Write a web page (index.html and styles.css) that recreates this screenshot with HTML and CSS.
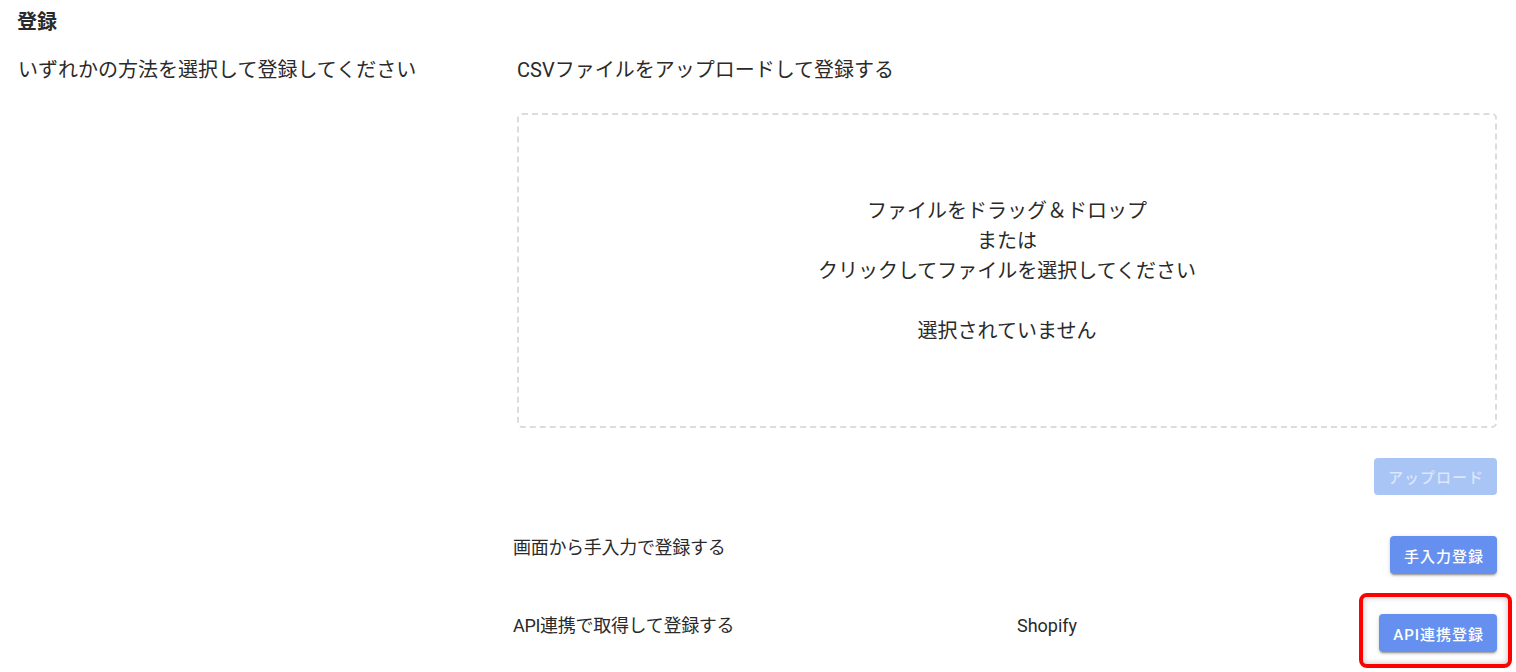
FILE: index.html
```
<!DOCTYPE html>
<html lang="ja">
<head>
    <meta charset="UTF-8">
    <meta name="viewport" content="width=device-width, initial-scale=1.0">
    <title>登録</title>
    <link rel="stylesheet" href="styles.css">
</head>
<body>

    <div class="page">
        <h1>登録</h1>

        <div class="layout">
            <div class="lead">いずれかの方法を選択して登録してください</div>

            <div class="methods">
                <h2>CSVファイルをアップロードして登録する</h2>

                <div class="drop-zone">
                    <p>ファイルをドラッグ＆ドロップ<br>または<br>クリックしてファイルを選択してください</p>
                    <p class="file-name">選択されていません</p>
                </div>

                <div class="upload-row">
                    <button type="button" class="btn" disabled>アップロード</button>
                </div>

                <div class="method-row">
                    <span class="label">画面から手入力で登録する</span>
                    <span class="value"></span>
                    <button type="button" class="btn">手入力登録</button>
                </div>

                <div class="method-row">
                    <span class="label">API連携で取得して登録する</span>
                    <span class="value">Shopify</span>
                    <div class="highlight-wrap">
                        <button type="button" class="btn">API連携登録</button>
                        <span class="highlight"></span>
                    </div>
                </div>
            </div>
        </div>
    </div>

</body>
</html>
```

FILE: styles.css
```
body {
    font-family: Roboto, "Noto Sans CJK JP", sans-serif;
    color: #2a2a2a;
    background: #fff;
    margin: 0;
    min-height: 100vh;
}

.page {
    padding: 8px 19px 30px 17px;
}

h1 {
    font-size: 20px;
    font-weight: bold;
    line-height: 28px;
    margin: 0;
}

.layout {
    display: grid;
    grid-template-columns: 500px 1fr;
    margin-top: 19px;
}

.lead {
    font-size: 20px;
    line-height: 30px;
    padding-left: 1px;
}

h2 {
    font-size: 20px;
    font-weight: normal;
    line-height: 30px;
    margin: 0;
}

.drop-zone {
    margin-top: 28px;
    height: 315px;
    box-sizing: border-box;
    border: 2px dashed #dcdcdc;
    border-radius: 5px;
    display: flex;
    flex-direction: column;
    justify-content: center;
    align-items: center;
    text-align: center;
    font-size: 20px;
    line-height: 30px;
    cursor: pointer;
}

    .drop-zone p {
        margin: 0;
    }

    .drop-zone .file-name {
        margin-top: 30px;
    }

.upload-row {
    display: flex;
    justify-content: flex-end;
    margin-top: 30px;
}

.method-row {
    display: grid;
    grid-template-columns: 500px 1fr auto;
    align-items: start;
    margin-top: 41px;
    font-size: 18px;
    line-height: 24px;
    letter-spacing: -0.3px;
}

    .method-row + .method-row {
        margin-top: 40px;
    }

    .method-row .label {
        margin-left: -4px;
    }

    .method-row .value {
        letter-spacing: 0;
    }

.btn {
    font-family: Roboto, "Noto Sans CJK JP", sans-serif;
    height: 38px;
    padding: 0 13px 0 14px;
    font-size: 15px;
    font-weight: 500;
    letter-spacing: 1px;
    color: #fff;
    background-color: #6590ef;
    border: none;
    border-radius: 4px;
    box-shadow: 0 3px 1px -2px rgba(0, 0, 0, 0.2), 0 2px 2px rgba(0, 0, 0, 0.14), 0 1px 5px rgba(0, 0, 0, 0.12);
    cursor: pointer;
}

    .btn:disabled {
        height: 37px;
        background-color: #a9c5f6;
        color: rgba(255, 255, 255, 0.6);
        box-shadow: none;
        cursor: default;
    }

.highlight-wrap {
    position: relative;
}

.highlight {
    position: absolute;
    top: -21px;
    left: -20px;
    right: -15px;
    bottom: -16px;
    border: 4px solid #ff0000;
    border-radius: 8px;
    box-shadow: inset 0 0 6px rgba(0, 0, 0, 0.25);
    pointer-events: none;
}
```
